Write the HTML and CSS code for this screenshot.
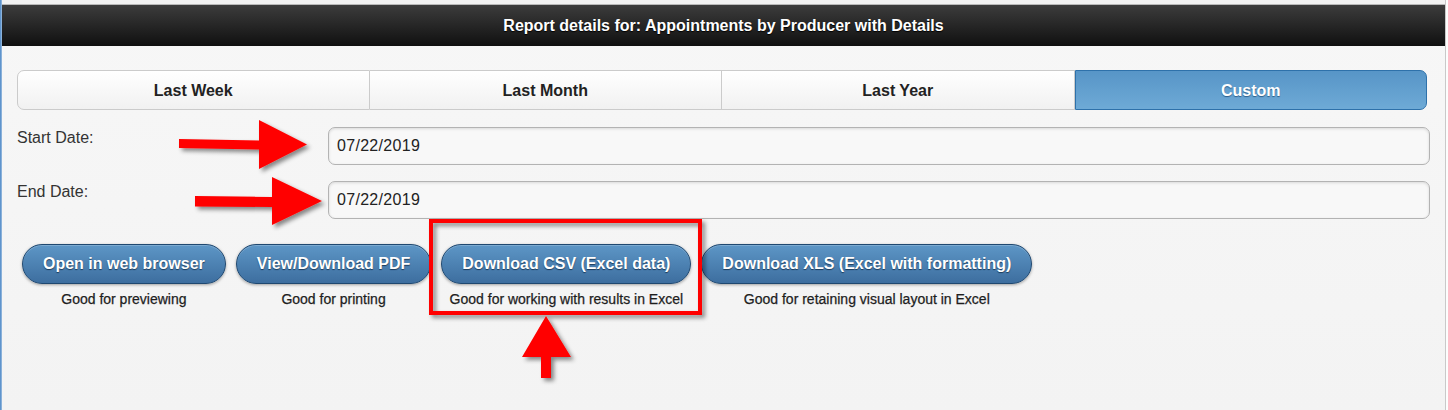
FILE: index.html
```html
<!DOCTYPE html>
<html lang="en">
<head>
<meta charset="utf-8">
<title>Report details</title>
<link rel="stylesheet" href="styles.css">
</head>
<body>
<div class="shell">
  <div class="edge-left"></div>
  <div class="main">
    <div class="topstrip"></div>
    <header class="titlebar">Report details for: Appointments by Producer with Details</header>
    <div class="content">
      <div class="tabs">
        <div class="tab">Last Week</div>
        <div class="tab">Last Month</div>
        <div class="tab">Last Year</div>
        <div class="tab active">Custom</div>
      </div>
      <div class="form">
        <label class="label" for="start">Start Date:</label>
        <input class="field" id="start" type="text" value="07/22/2019">
        <label class="label" for="end">End Date:</label>
        <input class="field" id="end" type="text" value="07/22/2019">
      </div>
      <div class="actions">
        <div class="action">
          <button class="btn">Open in web browser</button>
          <div class="caption">Good for previewing</div>
        </div>
        <div class="action">
          <button class="btn">View/Download PDF</button>
          <div class="caption">Good for printing</div>
        </div>
        <div class="action">
          <button class="btn">Download CSV (Excel data)</button>
          <div class="caption">Good for working with results in Excel</div>
        </div>
        <div class="action">
          <button class="btn">Download XLS (Excel with formatting)</button>
          <div class="caption">Good for retaining visual layout in Excel</div>
        </div>
      </div>
    </div>
  </div>
  <div class="edge-right"></div>
</div>
<svg class="annotations" width="1448" height="410" viewBox="0 0 1448 410" aria-hidden="true">
  <defs>
    <filter id="sh" x="-20%" y="-20%" width="140%" height="140%">
      <feDropShadow dx="3" dy="3" stdDeviation="2" flood-color="#000" flood-opacity="0.45"/>
    </filter>
  </defs>
  <g filter="url(#sh)" fill="#ff0000">
    <polygon points="179,139 259,140.5 259,120 307,144.5 259,169 259,149.5 179,148"/>
    <polygon points="195,196 272,197 272,177 322,201 272,225 272,207 195,206.5"/>
    <polygon points="546,316 571,357 551,357 551,378 541,378 541,357 522,357"/>
    <rect x="431" y="221" width="269" height="92" fill="none" stroke="#ff0000" stroke-width="4"/>
  </g>
</svg>
</body>
</html>
```
FILE: styles.css
```css
* { box-sizing: border-box; }

html, body {
  margin: 0;
  padding: 0;
  width: 1448px;
  height: 410px;
  overflow: hidden;
  font-family: "Liberation Sans", Arial, sans-serif;
}

.shell {
  display: flex;
  height: 410px;
  background: #f5f5f5;
}

.edge-left {
  width: 2px;
  background: linear-gradient(90deg, #4a86c6, #9fbfe0);
}

.edge-right {
  width: 3px;
  border-left: 1px solid #c9c9c9;
  background: #fdfdfd;
}

.main {
  flex: 1;
  display: flex;
  flex-direction: column;
  background: linear-gradient(#f7f7f7, #f3f3f3);
}

.topstrip {
  height: 5px;
  background: #f2f2f2;
  border-bottom: 1px solid #b9b9b9;
}

.titlebar {
  height: 41px;
  display: flex;
  align-items: center;
  justify-content: center;
  background: linear-gradient(#3c3c3c, #101010);
  color: #fff;
  font-weight: bold;
  font-size: 16px;
  text-shadow: 0 1px 1px #000;
}

.content {
  padding: 24px 15px 0 15px;
}

.tabs {
  display: grid;
  grid-template-columns: repeat(4, 1fr);
  height: 40px;
  margin-right: 3px;
}

.tab {
  display: flex;
  align-items: center;
  justify-content: center;
  padding-top: 1px;
  border: 1px solid #cbcbcb;
  border-left: none;
  background: linear-gradient(#ffffff, #f1f1f1);
  color: #222;
  font-weight: bold;
  font-size: 16px;
}

.tab:first-child {
  border-left: 1px solid #cbcbcb;
  border-radius: 7px 0 0 7px;
}

.tab.active {
  border: 1px solid #2e71aa;
  border-radius: 0 7px 7px 0;
  background: linear-gradient(#5795c7, #6eaad6);
  color: #fff;
  text-shadow: 0 1px 1px #2d5e8a;
}

.form {
  display: grid;
  grid-template-columns: 311px 1fr;
  row-gap: 16px;
  margin-top: 17px;
}

.label {
  font-size: 16px;
  line-height: 18px;
  color: #333;
  padding-top: 2px;
}

.field {
  height: 38px;
  margin: 0;
  padding: 0 8px;
  border: 1px solid #b3b3b3;
  border-radius: 7px;
  background: #f8f8f8;
  box-shadow: inset 0 1px 3px rgba(0, 0, 0, 0.12);
  font-family: "Liberation Sans", Arial, sans-serif;
  font-size: 16px;
  letter-spacing: 0.3px;
  color: #222;
  outline: none;
}

.actions {
  display: flex;
  gap: 10px;
  margin-top: 25px;
  margin-left: 5px;
}

.action {
  display: flex;
  flex-direction: column;
  align-items: center;
}

.btn {
  height: 40px;
  padding: 0 20px;
  border: 1px solid #1f4870;
  border-radius: 20px;
  background: linear-gradient(#5d96c6, #3d6e9f);
  box-shadow: 0 1px 3px rgba(0, 0, 0, 0.35), inset 0 1px 0 rgba(255, 255, 255, 0.2);
  color: #fff;
  font-family: "Liberation Sans", Arial, sans-serif;
  font-weight: bold;
  font-size: 16px;
  text-shadow: 0 1px 1px #1b3a5a;
  white-space: nowrap;
}

.caption {
  margin-top: 7px;
  font-size: 14px;
  line-height: 16px;
  color: #1e1e1e;
  -webkit-text-stroke: 0.25px #1e1e1e;
  white-space: nowrap;
}

.annotations {
  position: absolute;
  left: 0;
  top: 0;
  pointer-events: none;
}
```
